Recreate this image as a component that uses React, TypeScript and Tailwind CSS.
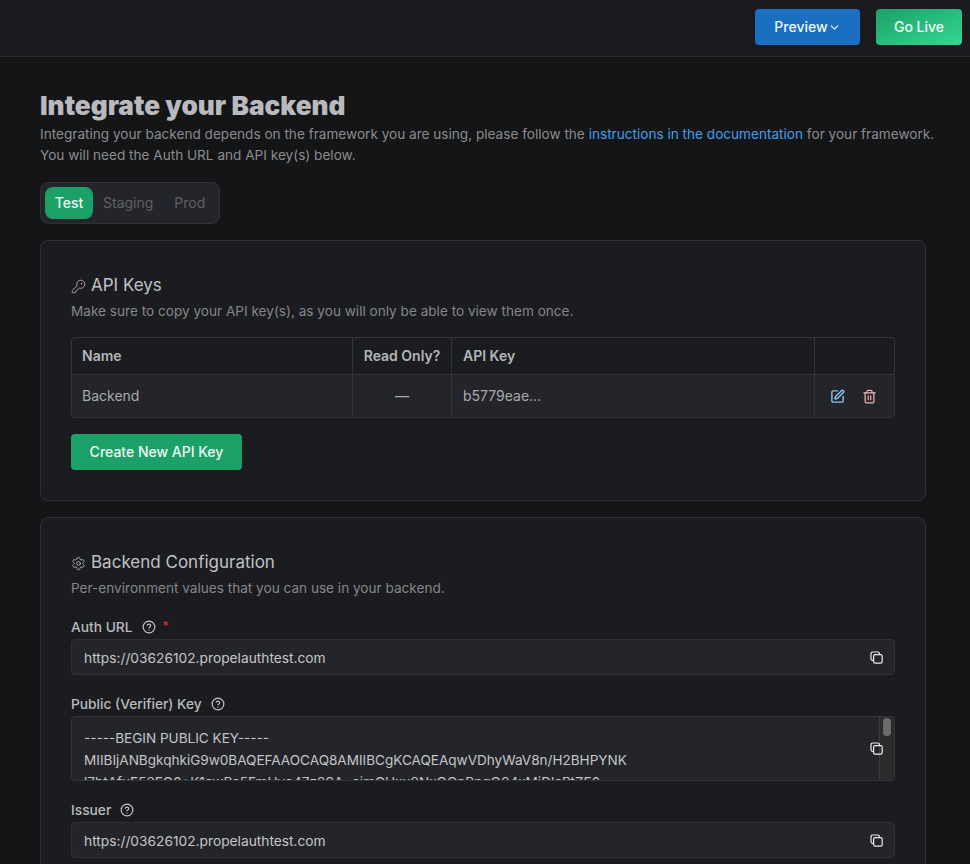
import React from 'react';
import { ChevronDown, CircleHelp, KeyRound, Settings, SquarePen, Trash2 } from 'lucide-react';

const CopyIcon = () => {
  return (
    <svg width="13" height="13" viewBox="0 0 13 13" fill="none" stroke="#eceded" strokeWidth="1.2">
      <path d="M3 9.4H2.6A1.6 1.6 0 0 1 1 7.8V2.6A1.6 1.6 0 0 1 2.6 1h5.2a1.6 1.6 0 0 1 1.6 1.6V3" />
      <rect x="3.6" y="3.6" width="8.6" height="8.6" rx="1.6" />
    </svg>
  );
};

const CopyField = ({ value }: { value: string }) => {
  return (
    <div className="flex h-[36px] items-center justify-between rounded-[4px] border border-[#2f3137] bg-[#24252a] pl-3 pr-[11px] text-[13.75px] text-[#c4c5c8]">
      <span className="pt-[2px]">{value}</span>
      <CopyIcon />
    </div>
  );
};

const FieldLabel = ({ text, required }: { text: string; required?: boolean }) => {
  return (
    <div className="mb-[2px] flex h-[20px] items-center text-[13.75px] font-medium text-[#b9babd]">
      <span>{text}</span>
      <CircleHelp size={14} strokeWidth={2} className="ml-[9px] text-[#c4c5c8]" />
      {required && <span className="ml-[7px] -mt-[2px] text-xs text-[#d32f2f]">*</span>}
    </div>
  );
};

const App = () => {
  return (
    <div className="h-screen overflow-hidden bg-[#141517] font-['Inter',sans-serif]">
      {/* Top bar */}
      <div className="flex h-[57px] items-start justify-end gap-4 border-b border-[#2b2c30] bg-[#1a1b1f] pr-[8px] pt-[9px]">
        <button className="flex h-[36px] w-[105px] items-center justify-center rounded-[4px] bg-[#1a6fc0] text-sm font-medium text-[#f2f6fb]">
          Preview
          <ChevronDown size={13} strokeWidth={2} />
        </button>
        <button className="h-[36px] w-[86px] rounded-[4px] bg-gradient-to-br from-[#1ca068] to-[#34d892] text-sm font-medium text-[#f4fbf7]">
          Go Live
        </button>
      </div>

      <div className="pl-[40px] pr-[44px] pt-[33px]">
        {/* Heading */}
        <h1 className="text-[26.2px] font-black leading-[32px] text-[#b9babe]">Integrate your Backend</h1>
        <p className="mt-[2px] whitespace-nowrap text-[13.6px] leading-[21px] text-[#8b8c90]">
          Integrating your backend depends on the framework you are using, please follow the{' '}
          <span className="text-[#42a0ea]">instructions in the documentation</span> for your framework.
          <br />
          You will need the Auth URL and API key(s) below.
        </p>

        {/* Environment tabs */}
        <div className="mt-[16px] flex h-[42px] w-[180px] items-center rounded-[8px] border border-[#303137] bg-[#24252a] px-[4px] text-sm">
          <div className="flex h-[32px] w-[48px] items-center justify-center rounded-[8px] bg-[#1ba168] font-medium text-[#f2f9f5]">
            Test
          </div>
          <div className="ml-[10px] text-[#5f6065]">Staging</div>
          <div className="ml-[21px] text-[#5f6065]">Prod</div>
        </div>

        {/* API keys */}
        <div className="mt-[16px] h-[261px] rounded-[8px] border border-[#2f3036] bg-[#1b1c20] px-[30px] pt-[33px]">
          <div className="flex h-[24px] items-center gap-[5px] text-[17px] text-[#c0c1c4]">
            <KeyRound size={15} strokeWidth={1.25} />
            <span>API Keys</span>
          </div>
          <p className="mt-[3px] text-[13.6px] leading-[20px] text-[#85868a]">
            Make sure to copy your API key(s), as you will only be able to view them once.
          </p>
          <div className="mt-[16px] overflow-hidden rounded-[4px] border border-[#33343a] text-sm">
            <div className="grid h-[37px] grid-cols-[281px_99px_363px_1fr] border-b border-[#33343a] font-semibold text-[#b4b5b8]">
              <div className="flex items-center border-r border-[#33343a] pl-[10px]">Name</div>
              <div className="flex items-center justify-center border-r border-[#33343a]">Read Only?</div>
              <div className="flex items-center border-r border-[#33343a] pl-[11px]">API Key</div>
              <div />
            </div>
            <div className="grid h-[42px] grid-cols-[281px_99px_363px_1fr] bg-[#24252a] text-[#a9aaad]">
              <div className="flex items-center border-r border-[#33343a] pl-[10px]">Backend</div>
              <div className="flex items-center justify-center border-r border-[#33343a]">—</div>
              <div className="flex items-center border-r border-[#33343a] pl-[11px]">b5779eae...</div>
              <div className="flex items-center justify-center gap-[17px] pr-[2px]">
                <SquarePen size={15} strokeWidth={2.25} className="text-[#86c6f3]" />
                <Trash2 size={15} strokeWidth={2} className="text-[#f2b0b0]" />
              </div>
            </div>
          </div>
          <button className="mt-[16px] h-[36px] w-[171px] rounded-[4px] bg-[#1ba168] text-sm font-medium text-[#f2f9f5]">
            Create New API Key
          </button>
        </div>

        {/* Backend configuration */}
        <div className="mt-[16px] h-[400px] rounded-[8px] border border-[#2f3036] bg-[#1b1c20] px-[30px] pt-[33px]">
          <div className="flex h-[24px] items-center gap-[5px] text-[17px] text-[#c0c1c4]">
            <Settings size={15} strokeWidth={1.25} />
            <span>Backend Configuration</span>
          </div>
          <p className="mt-[3px] text-[13.6px] leading-[20px] text-[#85868a]">
            Per-environment values that you can use in your backend.
          </p>

          <div className="mt-[19px]">
            <FieldLabel text="Auth URL" required />
            <CopyField value="https://03626102.propelauthtest.com" />
          </div>

          <div className="mt-[19px]">
            <FieldLabel text="Public (Verifier) Key" />
            <div className="relative flex h-[65px] overflow-hidden rounded-[4px] border border-[#33343a] bg-[#24252a]">
              <div className="flex-1 overflow-hidden whitespace-nowrap pl-3 pt-[10px] text-[13.55px] leading-[22px] text-[#c4c5c8]">
                -----BEGIN PUBLIC KEY-----
                <br />
                MIIBIjANBgkqhkiG9w0BAQEFAAOCAQ8AMIIBCgKCAQEAqwVDhyWaV8n/H2BHPYNK
                <br />
                l7btAfuE53FG6+K1cwPc5FmUvo47z2SA+oimGUxu9NxOOnPpgO04xMiDlcPtZF6
              </div>
              <div className="w-[15px] border-l border-[#3a3b3f] bg-[#2b2b2b] pl-[3px] pt-[1px]">
                <div className="h-[18px] w-[8px] rounded-full bg-[#6b6b6b]" />
              </div>
              <div className="absolute right-[11px] top-[25px]">
                <CopyIcon />
              </div>
            </div>
          </div>

          <div className="mt-[19px]">
            <FieldLabel text="Issuer" />
            <CopyField value="https://03626102.propelauthtest.com" />
          </div>
        </div>
      </div>
    </div>
  );
};

export default App;
